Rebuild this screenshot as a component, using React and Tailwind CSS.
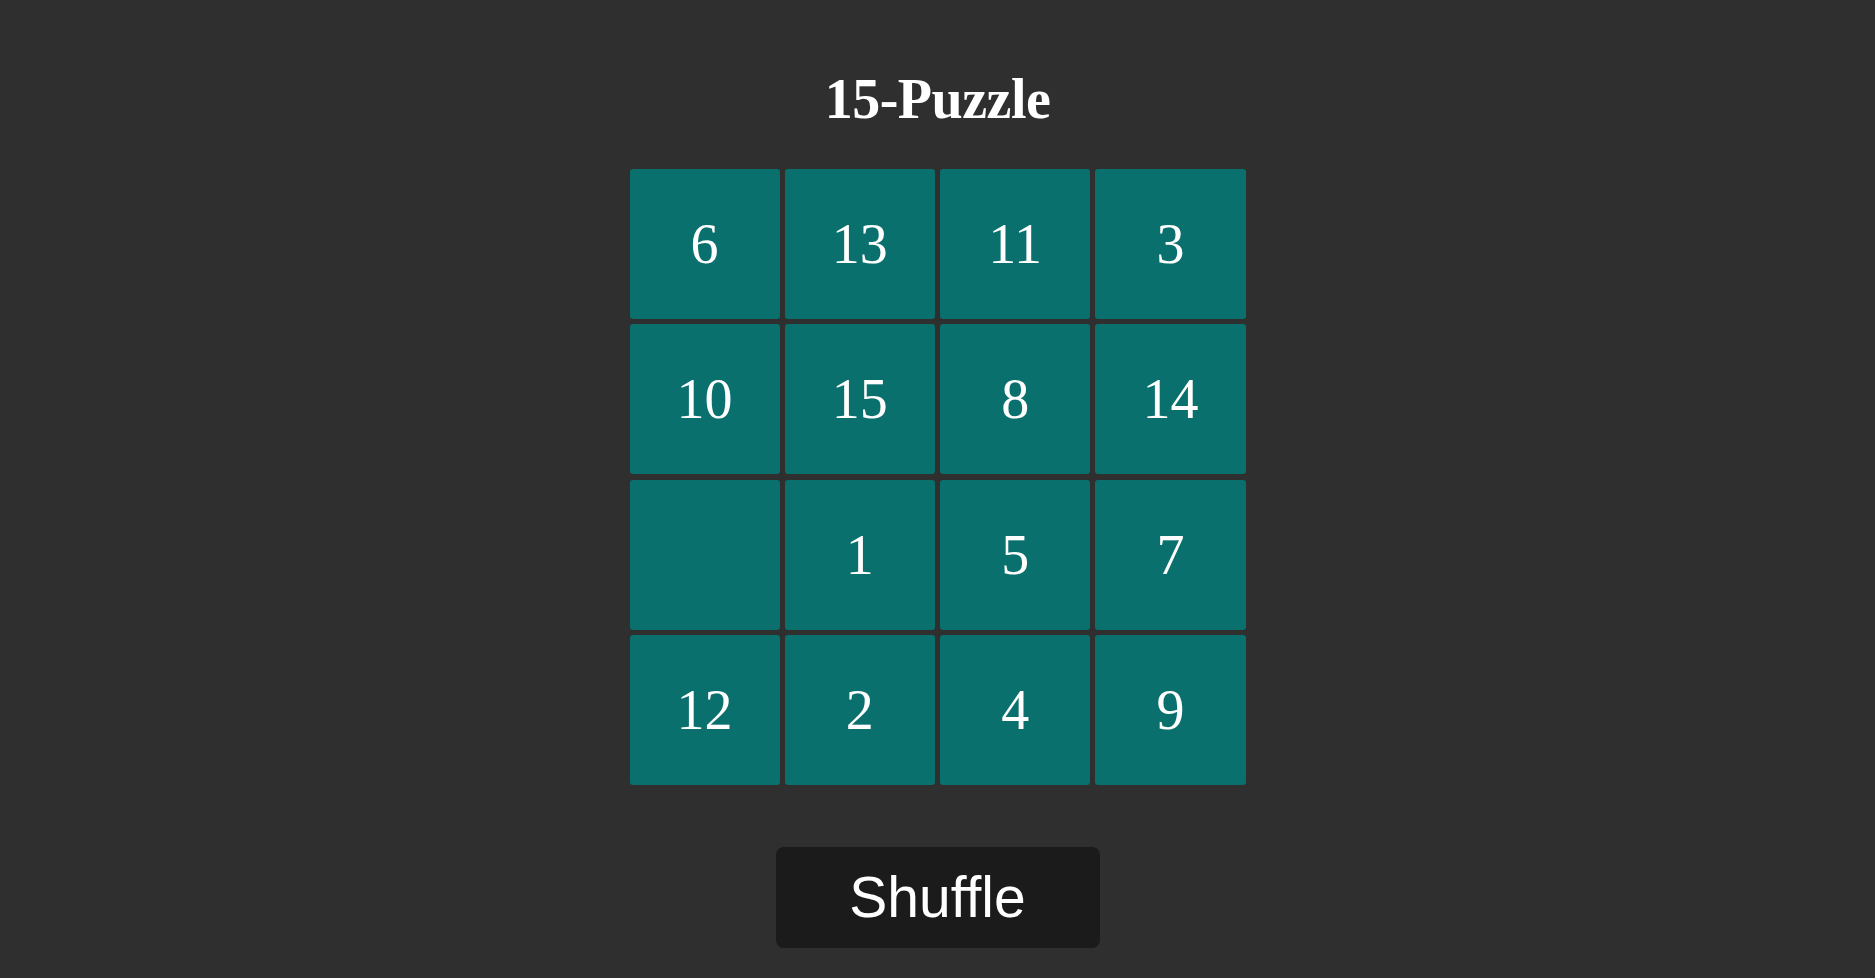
import React from "react";

const tiles = [6, 13, 11, 3, 10, 15, 8, 14, null, 1, 5, 7, 12, 2, 4, 9];

export default function App() {
  return (
    <div className="min-h-screen w-full bg-[#2f2f2f] flex flex-col items-center pt-[68px]">
      <h1 className="m-0 text-[56px] leading-[62px] font-bold text-white font-['Liberation_Serif','Times_New_Roman',serif] tracking-[-0.5px]">
        15-Puzzle
      </h1>
      <div className="mt-[39px] grid grid-cols-4 gap-[5.3px] w-[616px] h-[616px]">
        {tiles.map((t, i) => (
          <div
            key={i}
            className="bg-[#0a706e] rounded-[3px] flex items-center justify-center text-white text-[56px] leading-none font-['Liberation_Serif','Times_New_Roman',serif]"
          >
            {t ?? ""}
          </div>
        ))}
      </div>
      <button className="mt-[62px] w-[324px] h-[101px] bg-[#1b1b1b] rounded-[8px] text-white text-[57px] leading-none flex items-center justify-center font-['Liberation_Sans',Arial,sans-serif]">
        Shuffle
      </button>
    </div>
  );
}
